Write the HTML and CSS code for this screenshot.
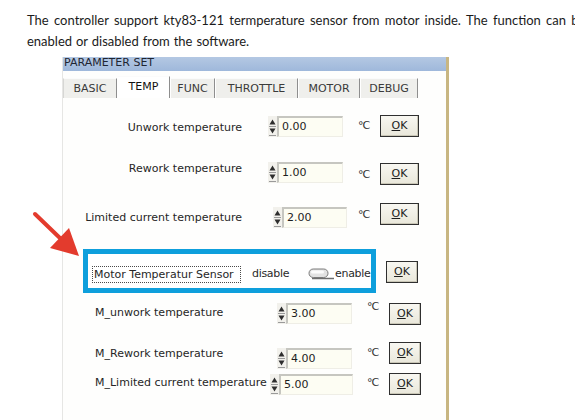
FILE: index.html
```html
<!DOCTYPE html>
<html>
<head>
<meta charset="utf-8">
<link rel="stylesheet" href="styles.css">
</head>
<body>
<p class="intro"><span class="just">The controller support kty83-121 termperature sensor from motor inside. The function can be</span><br>enabled or disabled from the software.</p>
<svg class="arrow" width="60" height="60" viewBox="0 0 60 60">
  <line x1="5" y1="9" x2="32" y2="35" stroke="#e33b2d" stroke-width="4" stroke-linecap="round"/>
  <path d="M49 51 L39 23 L20 43 Z" fill="#e33b2d"/>
</svg>
<div class="panel">
  <div class="titlebar">PARAMETER SET</div>
  <div class="tabs">
    <span class="tab t-basic">BASIC</span>
    <span class="tab active t-temp">TEMP</span>
    <span class="tab t-func">FUNC</span>
    <span class="tab t-thr">THROTTLE</span>
    <span class="tab t-motor">MOTOR</span>
    <span class="tab t-debug">DEBUG</span>
  </div>
  <div class="content">
    <div class="row r1">
      <span class="lbl lbl-r">Unwork temperature</span>
      <span class="fld"><svg class="spin" width="9" height="21" viewBox="0 0 9 21"><path d="M1.5 8.5 L4.5 3.5 L7.5 8.5Z" fill="#2e2e2e"/><line x1="1" y1="10.5" x2="8" y2="10.5" stroke="#9a9a9a"/><path d="M1.5 12.5 L4.5 17.5 L7.5 12.5Z" fill="#2e2e2e"/><line x1="1" y1="19.5" x2="8" y2="19.5" stroke="#9a9a9a"/></svg><span class="inp">0.00</span></span>
      <span class="unit">°C</span>
      <span class="ok"><u>O</u>K</span>
    </div>
    <div class="row r2">
      <span class="lbl lbl-r">Rework temperature</span>
      <span class="fld"><svg class="spin" width="9" height="21" viewBox="0 0 9 21"><path d="M1.5 8.5 L4.5 3.5 L7.5 8.5Z" fill="#2e2e2e"/><line x1="1" y1="10.5" x2="8" y2="10.5" stroke="#9a9a9a"/><path d="M1.5 12.5 L4.5 17.5 L7.5 12.5Z" fill="#2e2e2e"/><line x1="1" y1="19.5" x2="8" y2="19.5" stroke="#9a9a9a"/></svg><span class="inp">1.00</span></span>
      <span class="unit">°C</span>
      <span class="ok"><u>O</u>K</span>
    </div>
    <div class="row r3">
      <span class="lbl lbl-r">Limited current temperature</span>
      <span class="fld"><svg class="spin" width="9" height="21" viewBox="0 0 9 21"><path d="M1.5 8.5 L4.5 3.5 L7.5 8.5Z" fill="#2e2e2e"/><line x1="1" y1="10.5" x2="8" y2="10.5" stroke="#9a9a9a"/><path d="M1.5 12.5 L4.5 17.5 L7.5 12.5Z" fill="#2e2e2e"/><line x1="1" y1="19.5" x2="8" y2="19.5" stroke="#9a9a9a"/></svg><span class="inp">2.00</span></span>
      <span class="unit">°C</span>
      <span class="ok"><u>O</u>K</span>
    </div>
    <div class="row rbox">
      <div class="bluebox">
        <span class="focus">Motor Temperatur Sensor</span>
        <span class="opt opt-dis">disable</span>
        <svg class="toggle" width="27" height="12" viewBox="0 0 27 12">
          <path d="M4 10.5 H26" stroke="#6d6d6d" stroke-width="1.5"/>
          <rect x="1" y="1" width="19" height="8.5" rx="4.2" fill="#e2e2e2" stroke="#7b7b7b"/>
          <rect x="3" y="2.5" width="13" height="3" rx="1.5" fill="#fbfbfb"/>
        </svg>
        <span class="opt">enable</span>
      </div>
      <span class="ok ok-s"><u>O</u>K</span>
    </div>
    <div class="row m m1">
      <span class="lbl lbl-l">M_unwork temperature</span>
      <span class="fld"><svg class="spin" width="9" height="21" viewBox="0 0 9 21"><path d="M1.5 8.5 L4.5 3.5 L7.5 8.5Z" fill="#2e2e2e"/><line x1="1" y1="10.5" x2="8" y2="10.5" stroke="#9a9a9a"/><path d="M1.5 12.5 L4.5 17.5 L7.5 12.5Z" fill="#2e2e2e"/><line x1="1" y1="19.5" x2="8" y2="19.5" stroke="#9a9a9a"/></svg><span class="inp">3.00</span></span>
      <span class="unit">°C</span>
      <span class="ok ok-s"><u>O</u>K</span>
    </div>
    <div class="row m m2">
      <span class="lbl lbl-l">M_Rework temperature</span>
      <span class="fld"><svg class="spin" width="9" height="21" viewBox="0 0 9 21"><path d="M1.5 8.5 L4.5 3.5 L7.5 8.5Z" fill="#2e2e2e"/><line x1="1" y1="10.5" x2="8" y2="10.5" stroke="#9a9a9a"/><path d="M1.5 12.5 L4.5 17.5 L7.5 12.5Z" fill="#2e2e2e"/><line x1="1" y1="19.5" x2="8" y2="19.5" stroke="#9a9a9a"/></svg><span class="inp">4.00</span></span>
      <span class="unit">°C</span>
      <span class="ok ok-s"><u>O</u>K</span>
    </div>
    <div class="row m m3">
      <span class="lbl lbl-l">M_Limited current temperature</span>
      <span class="fld"><svg class="spin" width="9" height="21" viewBox="0 0 9 21"><path d="M1.5 8.5 L4.5 3.5 L7.5 8.5Z" fill="#2e2e2e"/><line x1="1" y1="10.5" x2="8" y2="10.5" stroke="#9a9a9a"/><path d="M1.5 12.5 L4.5 17.5 L7.5 12.5Z" fill="#2e2e2e"/><line x1="1" y1="19.5" x2="8" y2="19.5" stroke="#9a9a9a"/></svg><span class="inp">5.00</span></span>
      <span class="unit">°C</span>
      <span class="ok ok-s"><u>O</u>K</span>
    </div>
  </div>
</div>
</body>
</html>
```

FILE: styles.css
```css
* { box-sizing: border-box; }
html, body { margin: 0; padding: 0; }
body {
  width: 575px;
  height: 420px;
  overflow: hidden;
  background: #ffffff;
  position: relative;
  font-family: "DejaVu Sans", sans-serif;
}

.intro {
  margin: 0;
  padding: 10px 0 0 27px;
  font: 13px/21px Lato, "Liberation Sans", sans-serif;
  color: #1b1b1b;
  white-space: nowrap;
  word-spacing: 0.6px;
}
.just { word-spacing: 2px; }

.arrow {
  position: absolute;
  left: 30px;
  top: 205px;
}

.panel {
  margin: 5px 0 0 62px;
  width: 387px;
  height: 370px;
  border-left: 1px solid #e6e6e4;
  border-right: 3px solid #c8b682;
  background: #fefefd;
}

.titlebar {
  height: 14px;
  background: linear-gradient(#b4c8e3, #9fb8db);
  font-size: 11px;
  line-height: 12px;
  color: #1e2532;
  padding-left: 1px;
}

.tabs {
  display: flex;
  align-items: flex-end;
  height: 22px;
  margin-top: 5px;
}
.tab {
  height: 20px;
  font-size: 11px;
  line-height: 19px;
  color: #3a3a3a;
  text-align: center;
  background: #efefec;
  border-top: 1px solid #fbfbfb;
  border-left: 1px solid #ffffff;
  border-right: 1px solid #8e8e8e;
}
.tab.active {
  height: 22px;
  line-height: 19px;
  background: #ffffff;
  color: #111;
  padding-bottom: 2px;
}
.t-basic { width: 54px; border-left-color: #d6d6d4; }
.t-temp { width: 53px; }
.t-func { width: 45px; }
.t-thr { width: 83px; }
.t-motor { width: 62px; }
.t-debug { width: 58px; }

.content {
  display: flex;
  flex-direction: column;
}
.row {
  display: flex;
  align-items: flex-start;
}
.lbl {
  flex: none;
  width: 179px;
  white-space: nowrap;
  font-size: 11px;
  line-height: 14px;
  color: #262626;
}
.lbl-r { text-align: right; }
.lbl-l { padding-left: 32px; }

.fld {
  flex: none;
  display: flex;
  width: 116px;
  padding-left: 26px;
}
.m .fld { width: 125px; padding-left: 35px; }

.spin {
  flex: none;
  display: block;
  background: #f2f1ec;
}
.inp {
  flex: none;
  width: 66px;
  height: 21px;
  background: #fdfdf3;
  border-top: 2px solid #c6c6c0;
  border-left: 2px solid #c6c6c0;
  border-right: 1px solid #efeee6;
  border-bottom: 1px solid #efeee6;
  font-size: 11px;
  line-height: 18px;
  padding-left: 3px;
  color: #1e1e1e;
}
.unit {
  flex: none;
  width: 22px;
  font-size: 11px;
  line-height: 14px;
  color: #333;
  letter-spacing: -1px;
}
.ok {
  flex: none;
  width: 39px;
  height: 22px;
  border: 1px solid #2f2f2f;
  background: linear-gradient(#f8f7f1, #e9e7da);
  box-shadow: inset -1px -1px 0 #c9c6b6;
  font-size: 11px;
  line-height: 20px;
  text-align: center;
  color: #1c1c1c;
}
.ok-s { width: 32px; }

/* row 1 */
.r1 { margin-top: 17px; }
.r1 .lbl { margin-top: 6px; }
.r1 .fld { margin-top: 1px; }
.r1 .unit { margin-top: 4px; }

/* row 2 */
.r2 { margin-top: 25px; }
.r2 .unit { margin-top: 6px; }
.r2 .ok { margin-top: 1px; }

/* row 3 */
.r3 { margin-top: 18px; }
.r3 .lbl { margin-top: 8px; }
.r3 .fld { margin-top: 4px; padding-left: 31px; }
.r3 .inp { width: 65px; }
.r3 .unit { margin-top: 5px; }

/* highlighted sensor row */
.rbox { margin-top: 21px; }
.bluebox {
  flex: none;
  margin-left: 20px;
  width: 293px;
  height: 44px;
  border: 5px solid #0e9fdc;
  background: #ffffff;
  display: flex;
  align-items: flex-start;
  padding: 12px 0 0 4px;
}
.focus {
  flex: none;
  width: 149px;
  height: 17px;
  border: 1px dotted #4a4a4a;
  font-size: 11px;
  line-height: 15px;
  padding-left: 1px;
  white-space: nowrap;
  color: #262626;
}
.opt {
  flex: none;
  font-size: 11px;
  line-height: 15px;
  color: #2a2a2a;
  letter-spacing: -0.3px;
}
.opt-dis { margin-left: 11px; width: 56px; }
.toggle { flex: none; display: block; margin-top: 2px; }
.rbox .ok { margin-left: 10px; margin-top: 12px; }

/* M rows */
.m1 { margin-top: 10px; }
.m1 .lbl { margin-top: 3px; }
.m1 .unit { margin-top: -3px; }

.m2 { margin-top: 17px; }
.m2 .lbl { margin-top: 5px; }
.m2 .fld { margin-top: 6px; }
.m2 .unit { margin-top: 4px; }

.m3 { margin-top: 4px; }
.m3 .lbl { margin-top: 3px; }
.m3 .fld { margin-top: 1px; padding-left: 28px; }
.m3 .inp { width: 74px; }
.m3 .unit { margin-top: 3px; }
```
